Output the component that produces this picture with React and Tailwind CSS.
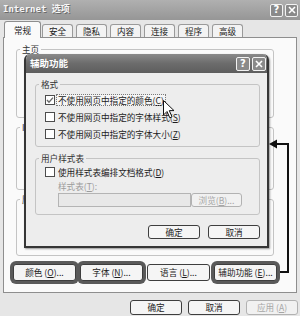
import React from 'react';

function CapBtn({ children, size = 'w-[13px] h-[13px]' }) {
  return (
    <div className={`${size} flex items-center justify-center rounded-[2px] border border-[#f2f2f2] bg-[#8a8a8a] text-white font-bold text-[10px] leading-none font-['DejaVu_Sans',sans-serif]`}>
      {children}
    </div>
  );
}

function XGlyph() {
  return (
    <svg width="8" height="8" viewBox="0 0 8 8">
      <path d="M1 1 L7 7 M7 1 L1 7" stroke="#fff" strokeWidth="1.6" />
    </svg>
  );
}

function Btn({ children, w = 'w-[52px]', h = 'h-[15px]', disabled, mark }) {
  return (
    <div
      className={`${w} ${h} flex items-center justify-center rounded-[3px] border text-[8.6px] leading-none ${
        disabled ? 'border-[#b2b2b2] text-[#a6a6a6] bg-[#f1f1f1]' : 'border-[#3e3e3e] text-[#1c1c1c] bg-[#f5f5f5]'
      } ${mark ? 'ring-[3px] ring-[#5a5a5a]' : ''}`}
    >
      {children}
    </div>
  );
}

function Check({ checked, focus, children }) {
  return (
    <div className="flex items-center h-[17px] pl-[9px]">
      <span className="w-[10px] h-[10px] border border-[#4c4c4c] bg-white flex items-center justify-center">
        {checked && (
          <svg width="8" height="8" viewBox="0 0 8 8">
            <path d="M1 4 L3 6.2 L7 1.6" stroke="#6a6a6a" strokeWidth="1.4" fill="none" />
          </svg>
        )}
      </span>
      <span className={`ml-[2px] px-[1px] leading-[10px] ${focus ? 'outline outline-1 outline-dotted outline-[#7a7a7a] bg-[#f6f6f6]' : ''}`}>
        {children}
      </span>
    </div>
  );
}

function Group({ label, className, children }) {
  return (
    <fieldset className={`border border-[#c4c4c4] rounded-[3px] ${className}`}>
      <legend className="ml-[3px] px-[2px] text-[8.6px] leading-[10px] text-[#333]">{label}</legend>
      {children}
    </fieldset>
  );
}

export default function App() {
  const tabs = ['安全', '隐私', '内容', '连接', '程序', '高级'];

  return (
    <div className="relative w-[300px] h-[316px] overflow-hidden bg-[#e6e6e6] text-[#1c1c1c] text-[8.6px] font-['Noto_Sans_CJK_SC',sans-serif]">
      {/* title bar */}
      <div className="h-[20px] flex items-center pl-[3px] bg-linear-to-b from-[#b0b0b0] to-[#969696]">
        <span className="font-['DejaVu_Sans_Mono','Noto_Sans_CJK_SC',monospace] font-bold text-[9px] text-[#f6f6f6] [text-shadow:1px_1px_0_#6a6a6a]">
          Internet 选项
        </span>
        <div className="ml-auto mr-[2px] flex gap-[2px]">
          <CapBtn>?</CapBtn>
          <CapBtn><XGlyph /></CapBtn>
        </div>
      </div>

      {/* tabs */}
      <div className="h-[17px] flex items-end pl-[4px]">
        <div className="relative z-10 -mb-px w-[37px] h-[17px] flex items-center justify-center border border-b-0 border-[#8e8e8e] rounded-t-[3px] bg-[#fafafa]">
          常规
        </div>
        {tabs.map((t, i) => (
          <div
            key={t}
            className={`${i === 0 ? 'ml-[1px]' : 'ml-[3px]'} w-[31px] h-[13px] flex items-center justify-center border border-b-0 border-[#9a9a9a] rounded-t-[3px] bg-[#f3f3f3]`}
          >
            {t}
          </div>
        ))}
      </div>

      {/* tab panel */}
      <div className="ml-[3px] w-[294px] h-[256px] border border-[#8e8e8e] bg-[#fafafa] pt-[6px] pl-[12px] flex flex-col">
        <Group label="主页" className="w-[258px] h-[74px]" />
        <Group label="Internet 临时文件" className="mt-[4px] w-[258px] h-[68px]" />
        <Group label="历史记录" className="mt-[4px] w-[258px] h-[62px]" />
        <div className="mt-[8px] -ml-[3px] flex gap-[4px]">
          <Btn w="w-[63px]" h="h-[17px]" mark>颜色 (<u>O</u>)...</Btn>
          <Btn w="w-[63px]" h="h-[17px]" mark>字体 (<u>N</u>)...</Btn>
          <Btn w="w-[63px]" h="h-[17px]">语言 (<u>L</u>)...</Btn>
          <Btn w="w-[63px]" h="h-[17px]" mark>辅助功能 (<u>E</u>)...</Btn>
        </div>
      </div>

      {/* dialog buttons */}
      <div className="mt-[7px] ml-[130px] flex gap-[6px]">
        <Btn>确定</Btn>
        <Btn>取消</Btn>
        <Btn disabled>应用 (<u>A</u>)</Btn>
      </div>

      {/* accessibility sub-dialog */}
      <div className="absolute left-[24px] top-[54px] w-[245px] h-[194px] flex flex-col rounded-t-[6px] overflow-hidden border-2 border-t-0 border-[#363636] shadow-[1px_1px_2px_rgba(0,0,0,0.4)]">
        <div className="h-[19px] flex items-center pl-[4px] pr-[1px] bg-linear-to-b from-[#8a8a8a] via-[#6c6c6c] to-[#5e5e5e]">
          <span className="text-white font-bold text-[9.5px]">辅助功能</span>
          <div className="ml-auto flex gap-[2px]">
            <CapBtn size="w-[14px] h-[14px]">?</CapBtn>
            <CapBtn size="w-[14px] h-[14px]"><XGlyph /></CapBtn>
          </div>
        </div>
        <div className="flex-1 bg-[#ededed] pl-[9px] pr-[7px] flex flex-col">
          <Group label="格式" className="mt-[6px] h-[68px]">
            <div className="mt-[2px]">
              <Check checked focus>不使用网页中指定的颜色(<u>C</u>)</Check>
              <Check>不使用网页中指定的字体样式(<u>S</u>)</Check>
              <Check>不使用网页中指定的字体大小(<u>Z</u>)</Check>
            </div>
          </Group>
          <Group label="用户样式表" className="mt-[6px] h-[62px]">
            <Check>使用样式表编排文档格式(<u>D</u>)</Check>
            <div className="pl-[22px] mt-[1px] leading-[10px] text-[#9c9c9c]">样式表(<u>T</u>):</div>
            <div className="pl-[22px] mt-[2px] flex items-center">
              <div className="w-[133px] h-[14px] border border-[#b4b4b4] bg-[#e8e8e8]" />
              <Btn w="w-[51px]" h="h-[14px]" disabled>浏览(<u>B</u>)...</Btn>
            </div>
          </Group>
          <div className="mt-[10px] flex justify-end gap-[8px]">
            <Btn h="h-[14px]">确定</Btn>
            <Btn h="h-[14px]">取消</Btn>
          </div>
        </div>
      </div>

      {/* mouse pointer */}
      <svg className="absolute left-[163px] top-[100px]" width="12" height="19" viewBox="0 0 12 19">
        <path d="M0.5 0.5 L0.5 15 L4 11.5 L6.8 17.8 L9 16.8 L6.3 10.6 L11 10.6 Z" fill="#fff" stroke="#111" strokeWidth="1" />
      </svg>

      {/* annotation arrow */}
      <svg className="absolute left-0 top-0 pointer-events-none" width="300" height="316" viewBox="0 0 300 316">
        <polyline points="280,272 288,272 288,144 276,144" fill="none" stroke="#111" strokeWidth="2" />
        <polygon points="269,144 277,139.5 277,148.5" fill="#111" />
      </svg>
    </div>
  );
}
